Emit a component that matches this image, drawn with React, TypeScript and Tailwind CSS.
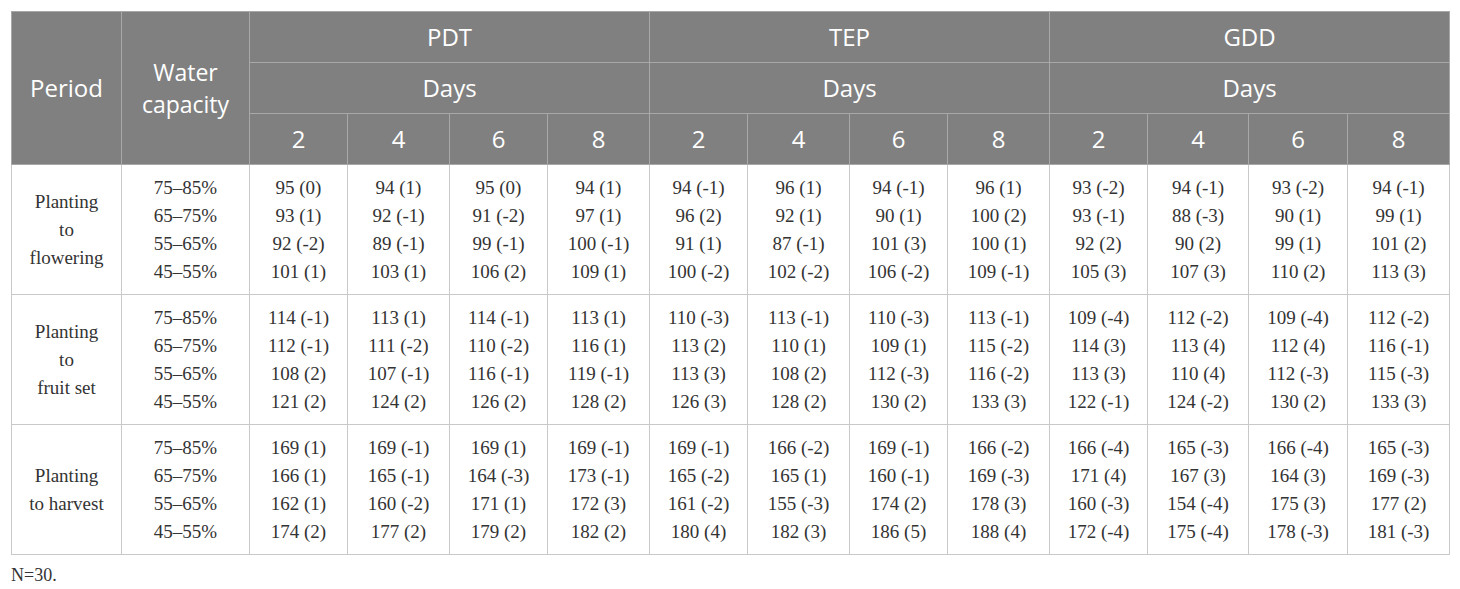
import React from 'react';

const groups = ['PDT', 'TEP', 'GDD'];
const days = ['2', '4', '6', '8'];
const capacities = ['75–85%', '65–75%', '55–65%', '45–55%'];
const colWidths = [98, 102, 98, 102, 98, 102, 98, 102, 98, 101, 99, 102];

interface PeriodRow {
  label: React.ReactNode;
  // one array per capacity line, 12 cells each (PDT 2-8, TEP 2-8, GDD 2-8)
  values: string[][];
}

const rows: PeriodRow[] = [
  {
    label: <>Planting<br />to<br />flowering</>,
    values: [
      ['95 (0)', '94 (1)', '95 (0)', '94 (1)', '94 (-1)', '96 (1)', '94 (-1)', '96 (1)', '93 (-2)', '94 (-1)', '93 (-2)', '94 (-1)'],
      ['93 (1)', '92 (-1)', '91 (-2)', '97 (1)', '96 (2)', '92 (1)', '90 (1)', '100 (2)', '93 (-1)', '88 (-3)', '90 (1)', '99 (1)'],
      ['92 (-2)', '89 (-1)', '99 (-1)', '100 (-1)', '91 (1)', '87 (-1)', '101 (3)', '100 (1)', '92 (2)', '90 (2)', '99 (1)', '101 (2)'],
      ['101 (1)', '103 (1)', '106 (2)', '109 (1)', '100 (-2)', '102 (-2)', '106 (-2)', '109 (-1)', '105 (3)', '107 (3)', '110 (2)', '113 (3)'],
    ],
  },
  {
    label: <>Planting<br />to<br />fruit set</>,
    values: [
      ['114 (-1)', '113 (1)', '114 (-1)', '113 (1)', '110 (-3)', '113 (-1)', '110 (-3)', '113 (-1)', '109 (-4)', '112 (-2)', '109 (-4)', '112 (-2)'],
      ['112 (-1)', '111 (-2)', '110 (-2)', '116 (1)', '113 (2)', '110 (1)', '109 (1)', '115 (-2)', '114 (3)', '113 (4)', '112 (4)', '116 (-1)'],
      ['108 (2)', '107 (-1)', '116 (-1)', '119 (-1)', '113 (3)', '108 (2)', '112 (-3)', '116 (-2)', '113 (3)', '110 (4)', '112 (-3)', '115 (-3)'],
      ['121 (2)', '124 (2)', '126 (2)', '128 (2)', '126 (3)', '128 (2)', '130 (2)', '133 (3)', '122 (-1)', '124 (-2)', '130 (2)', '133 (3)'],
    ],
  },
  {
    label: <>Planting<br />to harvest</>,
    values: [
      ['169 (1)', '169 (-1)', '169 (1)', '169 (-1)', '169 (-1)', '166 (-2)', '169 (-1)', '166 (-2)', '166 (-4)', '165 (-3)', '166 (-4)', '165 (-3)'],
      ['166 (1)', '165 (-1)', '164 (-3)', '173 (-1)', '165 (-2)', '165 (1)', '160 (-1)', '169 (-3)', '171 (4)', '167 (3)', '164 (3)', '169 (-3)'],
      ['162 (1)', '160 (-2)', '171 (1)', '172 (3)', '161 (-2)', '155 (-3)', '174 (2)', '178 (3)', '160 (-3)', '154 (-4)', '175 (3)', '177 (2)'],
      ['174 (2)', '177 (2)', '179 (2)', '182 (2)', '180 (4)', '182 (3)', '186 (5)', '188 (4)', '172 (-4)', '175 (-4)', '178 (-3)', '181 (-3)'],
    ],
  },
];

const th = 'border border-[#a8a8a8] bg-[#808080] text-white font-normal text-center align-middle';
const td = 'border border-[#c9c9c9] text-center align-middle';

export default function App() {
  return (
    <div className="bg-white w-[1460px] h-[589px] px-[11px] pt-[11px] text-[#333]">
      <table className="table-fixed border-collapse w-[1438px]">
        <colgroup>
          <col className="w-[110px]" />
          <col className="w-[128px]" />
          {colWidths.map((w, i) => (
            <col key={i} style={{ width: w }} />
          ))}
        </colgroup>
        <thead className="font-['Open_Sans',sans-serif] text-[24px] leading-[28px]">
          <tr className="h-[51px]">
            <th rowSpan={3} className={th}>Period</th>
            <th rowSpan={3} className={`${th} text-[23px] leading-[32px]`}>Water<br />capacity</th>
            {groups.map((g) => (
              <th key={g} colSpan={4} className={th}>{g}</th>
            ))}
          </tr>
          <tr className="h-[51px]">
            {groups.map((g) => (
              <th key={g} colSpan={4} className={th}>Days</th>
            ))}
          </tr>
          <tr className="h-[51px]">
            {groups.map((g) =>
              days.map((d) => (
                <th key={g + d} className={th}>{d}</th>
              ))
            )}
          </tr>
        </thead>
        <tbody className="font-['Liberation_Serif',serif] text-[19px] leading-[28px]">
          {rows.map((row, r) => (
            <tr key={r} className="h-[130px]">
              <td className={td}>{row.label}</td>
              <td className={td}>
                {capacities.map((c) => (
                  <div key={c}>{c}</div>
                ))}
              </td>
              {row.values[0].map((_, col) => (
                <td key={col} className={td}>
                  {row.values.map((line, li) => (
                    <div key={li}>{line[col]}</div>
                  ))}
                </td>
              ))}
            </tr>
          ))}
        </tbody>
      </table>
      <p className="mt-[9px] font-['Liberation_Serif',serif] text-[18px] leading-[22px]">N=30.</p>
    </div>
  );
}
